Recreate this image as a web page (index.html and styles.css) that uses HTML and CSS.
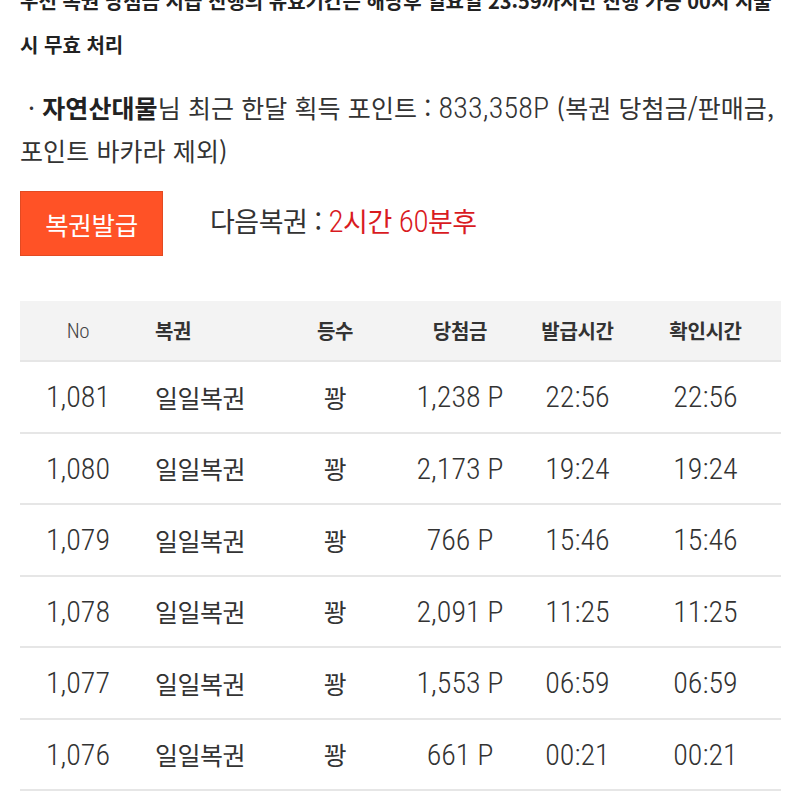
FILE: index.html
```html
<!DOCTYPE html>
<html lang="ko">
<head>
<meta charset="utf-8">
<link rel="stylesheet" href="styles.css">
</head>
<body>
<div class="page">
  <p class="notice">우선 복권 당첨금 지급 진행의 유효기간은 해당후 일요일 23:59까지만 진행 가능 00시 지불<br>시 무효 처리</p>
  <p class="points"><span class="dot">·</span> <b>자연산대물</b>님 최근 한달 획득 포인트 : <span class="num">833,358P</span> (복권 당첨금/판매금, 포인트 바카라 제외)</p>
  <div class="issue">
    <button class="btn">복권발급</button>
    <div class="next">다음복권 : <span class="red"><span class="num">2</span>시간 <span class="num">60</span>분후</span></div>
  </div>
  <table class="list">
    <thead>
      <tr><th class="c-no">No</th><th class="c-name">복권</th><th class="c-rank">등수</th><th class="c-prize">당첨금</th><th class="c-t1">발급시간</th><th class="c-t2">확인시간</th></tr>
    </thead>
    <tbody>
      <tr><td class="c-no num">1,081</td><td class="c-name">일일복권</td><td class="c-rank">꽝</td><td class="c-prize num">1,238 P</td><td class="c-t1 num">22:56</td><td class="c-t2 num">22:56</td></tr>
      <tr><td class="c-no num">1,080</td><td class="c-name">일일복권</td><td class="c-rank">꽝</td><td class="c-prize num">2,173 P</td><td class="c-t1 num">19:24</td><td class="c-t2 num">19:24</td></tr>
      <tr><td class="c-no num">1,079</td><td class="c-name">일일복권</td><td class="c-rank">꽝</td><td class="c-prize num">766 P</td><td class="c-t1 num">15:46</td><td class="c-t2 num">15:46</td></tr>
      <tr><td class="c-no num">1,078</td><td class="c-name">일일복권</td><td class="c-rank">꽝</td><td class="c-prize num">2,091 P</td><td class="c-t1 num">11:25</td><td class="c-t2 num">11:25</td></tr>
      <tr><td class="c-no num">1,077</td><td class="c-name">일일복권</td><td class="c-rank">꽝</td><td class="c-prize num">1,553 P</td><td class="c-t1 num">06:59</td><td class="c-t2 num">06:59</td></tr>
      <tr><td class="c-no num">1,076</td><td class="c-name">일일복권</td><td class="c-rank">꽝</td><td class="c-prize num">661 P</td><td class="c-t1 num">00:21</td><td class="c-t2 num">00:21</td></tr>
    </tbody>
  </table>
</div>
</body>
</html>
```

FILE: styles.css
```css
html, body {
  margin: 0;
  padding: 0;
  background: #ffffff;
}
body {
  font-family: "Noto Sans CJK KR", "Noto Sans", sans-serif;
  color: #333333;
  overflow: hidden;
}
.page {
  padding: 0 19px 0 20px;
}
.num {
  font-family: "Roboto", "Noto Sans CJK KR", sans-serif;
  font-stretch: 85%;
  font-weight: 300;
}
.notice {
  margin: -21px 0 0 0;
  font-size: 20px;
  font-weight: 700;
  line-height: 44px;
  color: #222222;
  letter-spacing: 0;
  white-space: nowrap;
}
.points {
  margin: 19px 0 0 0;
  font-size: 25px;
  line-height: 42px;
  color: #333333;
  letter-spacing: 0.1px;
  word-break: keep-all;
}
.points .num {
  font-size: 30px;
  letter-spacing: 0.2px;
}
.points .dot {
  display: inline-block;
  margin-left: 8px;
}
.points b {
  font-weight: 700;
  color: #222222;
}
.issue {
  margin-top: 20px;
  display: flex;
  align-items: center;
  gap: 47px;
}
.btn {
  width: 143px;
  height: 65px;
  background: #ff5226;
  border: 1px solid #e24a22;
  color: #ffffff;
  font-family: "Noto Sans CJK KR", sans-serif;
  font-size: 25.5px;
  letter-spacing: -0.3px;
  padding: 0;
}
.next {
  font-size: 27px;
  letter-spacing: -0.5px;
  color: #333333;
  margin-top: -6px;
}
.next .num {
  font-size: 31px;
}
.red {
  color: #d91b1f;
}
.list {
  margin-top: 45px;
  width: 761px;
  border-collapse: collapse;
  table-layout: fixed;
}
.list th {
  background: #f3f3f3;
  height: 59px;
  font-size: 20px;
  font-weight: 700;
  color: #333333;
  letter-spacing: -0.3px;
  border-bottom: 2px solid #e6e6e6;
  padding: 0;
}
.list th.c-no {
  font-weight: 300;
  font-family: "Roboto", sans-serif;
  font-stretch: 85%;
  font-size: 21px;
  color: #444444;
}
.list td {
  height: 69.5px;
  font-size: 25px;
  letter-spacing: -0.5px;
  color: #333333;
  border-bottom: 2px solid #e6e6e6;
  padding: 0;
}
.list td.num {
  font-size: 30px;
  letter-spacing: 0;
}
.c-no { width: 116px; text-align: center; }
.c-name { width: 120px; text-align: left; padding-left: 19px !important; }
.c-rank { width: 120px; text-align: center; }
.c-prize { width: 130px; text-align: center; }
.c-t1 { width: 105px; text-align: center; }
.c-t2 { width: 151px; text-align: center; }
```
